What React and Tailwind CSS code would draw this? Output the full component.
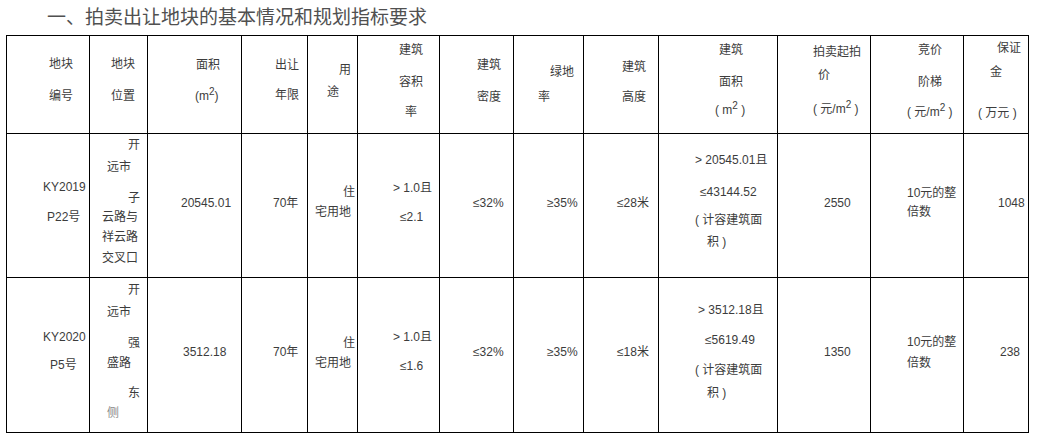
import React from "react";

function L({ c = "", children }) {
  return <div className={"h-4 leading-4 whitespace-nowrap " + c}>{children}</div>;
}

function C({ c = "", children }) {
  return <div className={"bg-white flex flex-col overflow-hidden " + c}>{children}</div>;
}

function M2() {
  return (
    <>
      m<sup className="text-[10px]">2</sup>
    </>
  );
}

export default function App() {
  return (
    <div className="w-[1040px] h-[439px] bg-white text-[#3c3c3c] font-['Liberation_Sans','Noto_Sans_CJK_SC',sans-serif] overflow-hidden">
      <div className="h-[35px] pl-[47px] pt-[6px] text-[19px] leading-[20px] text-[#505050] font-['Noto_Sans_CJK_SC',sans-serif] whitespace-nowrap">
        一、拍卖出让地块的基本情况和规划指标要求
      </div>
      <div className="ml-[6px] w-fit grid grid-cols-[82px_57px_93px_65px_49px_81px_73px_69px_74px_118px_92px_92px_64px] grid-rows-[97px_143px_154px] gap-px p-px bg-black text-[12px]">
        {/* Header */}
        <C c="pt-[20px]">
          <L c="pl-[42px]">地块</L>
          <L c="pl-[42px] mt-[16px]">编号</L>
        </C>
        <C c="pt-[20px]">
          <L c="pl-[21px]">地块</L>
          <L c="pl-[21px] mt-[16px]">位置</L>
        </C>
        <C c="pt-[21px]">
          <L c="pl-[48px]">面积</L>
          <L c="pl-[47px] mt-[15px]">(<M2 />)</L>
        </C>
        <C c="pt-[21px]">
          <L c="pl-[33px]">出让</L>
          <L c="pl-[33px] mt-[14px]">年限</L>
        </C>
        <C c="pt-[26px]">
          <L c="pl-[31px]">用</L>
          <L c="pl-[19px] mt-[6px]">途</L>
        </C>
        <C c="pt-[6px]">
          <L c="pl-[41px]">建筑</L>
          <L c="pl-[41px] mt-[16px]">容积</L>
          <L c="pl-[47px] mt-[14px]">率</L>
        </C>
        <C c="pt-[21px]">
          <L c="pl-[37px]">建筑</L>
          <L c="pl-[37px] mt-[16px]">密度</L>
        </C>
        <C c="pt-[28px]">
          <L c="pl-[36px]">绿地</L>
          <L c="pl-[24px] mt-[9px]">率</L>
        </C>
        <C c="pt-[23px]">
          <L c="pl-[38px]">建筑</L>
          <L c="pl-[38px] mt-[14px]">高度</L>
        </C>
        <C c="pt-[6px]">
          <L c="pl-[60px]">建筑</L>
          <L c="pl-[60px] mt-[16px]">面积</L>
          <L c="pl-[56px] mt-[12px]">(&nbsp;<M2 />&nbsp;)</L>
        </C>
        <C c="pt-[8px]">
          <L c="pl-[35px]">拍卖起拍</L>
          <L c="pl-[40px] mt-[7px]">价</L>
          <L c="pl-[35px] mt-[18px]">(&nbsp;元/<M2 />&nbsp;)</L>
        </C>
        <C c="pt-[6px]">
          <L c="pl-[47px]">竞价</L>
          <L c="pl-[47px] mt-[16px]">阶梯</L>
          <L c="pl-[36px] mt-[14px]">(&nbsp;元/<M2 />&nbsp;)</L>
        </C>
        <C c="pt-[4px]">
          <L c="pl-[33px]">保证</L>
          <L c="pl-[26px] mt-[8px]">金</L>
          <L c="pl-[14px] mt-[25px]">(&nbsp;万元&nbsp;)</L>
        </C>

        {/* Row 1 */}
        <C c="pt-[45px]">
          <L c="pl-[36px]">KY2019</L>
          <L c="pl-[40px] mt-[14px]">P22号</L>
        </C>
        <C c="pt-[3px]">
          <L c="pl-[38px]">开</L>
          <L c="pl-[17px] mt-[6px]">远市</L>
          <L c="pl-[38px] mt-[15px]">子</L>
          <L c="pl-[12px] mt-[3px]">云路与</L>
          <L c="pl-[12px] mt-[4px]">祥云路</L>
          <L c="pl-[12px] mt-[5px]">交叉口</L>
        </C>
        <C c="pt-[61px]">
          <L c="pl-[33px]">20545.01</L>
        </C>
        <C c="pt-[61px]">
          <L c="pl-[31px]">70年</L>
        </C>
        <C c="pt-[50px]">
          <L c="pl-[35px]">住</L>
          <L c="pl-[7px] mt-[4px]">宅用地</L>
        </C>
        <C c="pt-[46px]">
          <L c="pl-[35px]">&gt;&nbsp;1.0且</L>
          <L c="pl-[42px] mt-[13px]">≤2.1</L>
        </C>
        <C c="pt-[61px]">
          <L c="pl-[33px]">≤32%</L>
        </C>
        <C c="pt-[61px]">
          <L c="pl-[33px]">≥35%</L>
        </C>
        <C c="pt-[61px]">
          <L c="pl-[33px]">≤28米</L>
        </C>
        <C c="pt-[18px]">
          <L c="pl-[36px]">&gt;&nbsp;20545.01且</L>
          <L c="pl-[41px] mt-[16px]">≤43144.52</L>
          <L c="pl-[36px] mt-[12px]">(&nbsp;计容建筑面</L>
          <L c="pl-[48px] mt-[6px]">积&nbsp;)</L>
        </C>
        <C c="pt-[61px]">
          <L c="pl-[46px]">2550</L>
        </C>
        <C c="pt-[51px]">
          <L c="pl-[36px]">10元的整</L>
          <L c="pl-[36px] mt-[3px]">倍数</L>
        </C>
        <C c="pt-[61px]">
          <L c="pl-[34px]">1048</L>
        </C>

        {/* Row 2 */}
        <C c="pt-[51px]">
          <L c="pl-[36px]">KY2020</L>
          <L c="pl-[43px] mt-[12px]">P5号</L>
        </C>
        <C c="pt-[4px]">
          <L c="pl-[38px]">开</L>
          <L c="pl-[17px] mt-[6px]">远市</L>
          <L c="pl-[38px] mt-[15px]">强</L>
          <L c="pl-[17px] mt-[4px]">盛路</L>
          <L c="pl-[38px] mt-[14px]">东</L>
          <L c="pl-[17px] mt-[4px] text-[#8a8a8a]">侧</L>
        </C>
        <C c="pt-[66px]">
          <L c="pl-[35px]">3512.18</L>
        </C>
        <C c="pt-[66px]">
          <L c="pl-[31px]">70年</L>
        </C>
        <C c="pt-[57px]">
          <L c="pl-[35px]">住</L>
          <L c="pl-[7px] mt-[4px]">宅用地</L>
        </C>
        <C c="pt-[51px]">
          <L c="pl-[35px]">&gt;&nbsp;1.0且</L>
          <L c="pl-[42px] mt-[13px]">≤1.6</L>
        </C>
        <C c="pt-[66px]">
          <L c="pl-[33px]">≤32%</L>
        </C>
        <C c="pt-[66px]">
          <L c="pl-[33px]">≥35%</L>
        </C>
        <C c="pt-[66px]">
          <L c="pl-[33px]">≤18米</L>
        </C>
        <C c="pt-[24px]">
          <L c="pl-[39px]">&gt;&nbsp;3512.18且</L>
          <L c="pl-[46px] mt-[14px]">≤5619.49</L>
          <L c="pl-[36px] mt-[14px]">(&nbsp;计容建筑面</L>
          <L c="pl-[48px] mt-[7px]">积&nbsp;)</L>
        </C>
        <C c="pt-[66px]">
          <L c="pl-[46px]">1350</L>
        </C>
        <C c="pt-[56px]">
          <L c="pl-[36px]">10元的整</L>
          <L c="pl-[36px] mt-[5px]">倍数</L>
        </C>
        <C c="pt-[66px]">
          <L c="pl-[36px]">238</L>
        </C>
      </div>
    </div>
  );
}
